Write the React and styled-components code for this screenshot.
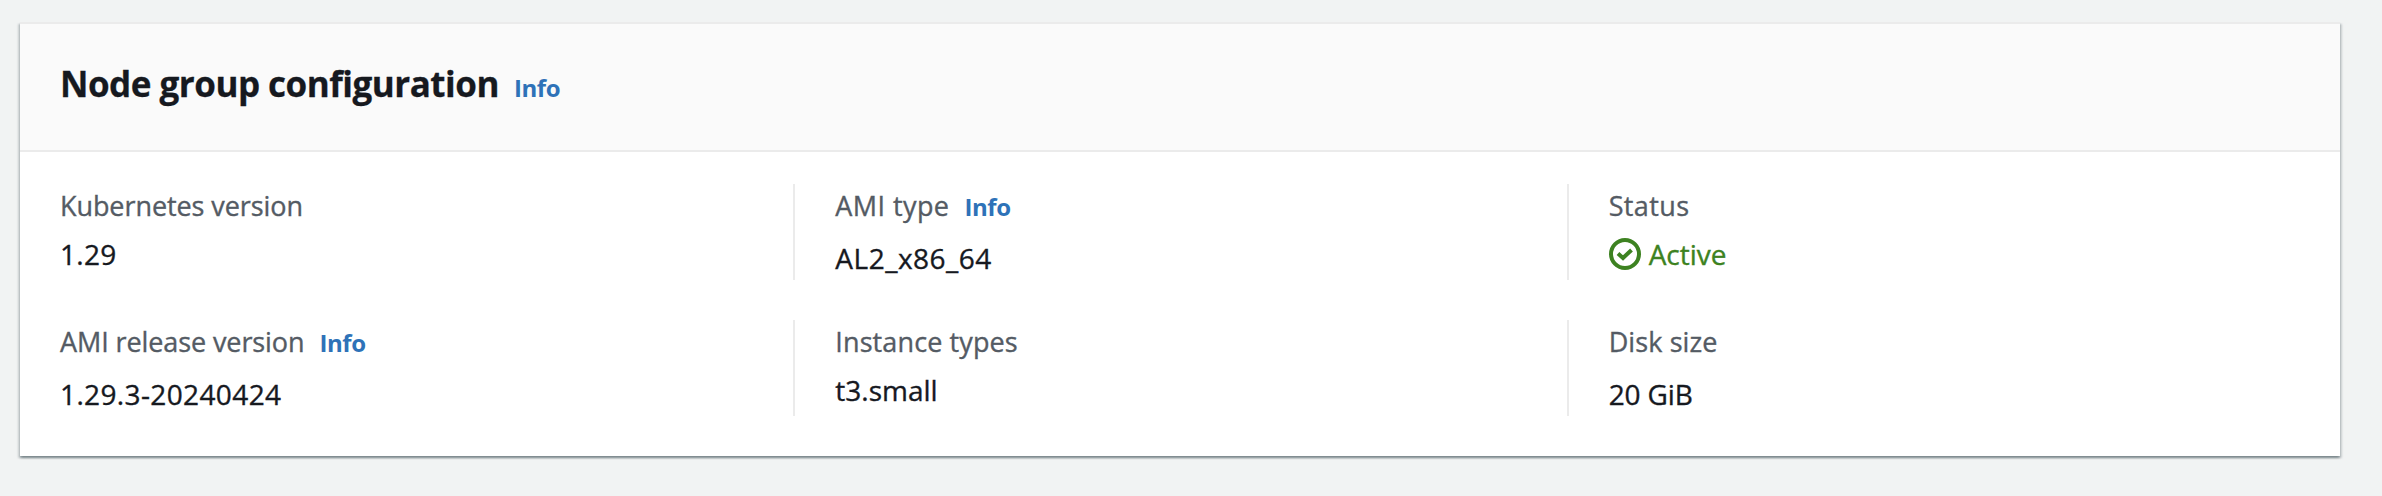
import React from 'react';
import styled, { createGlobalStyle } from 'styled-components';

const GlobalStyle = createGlobalStyle`
  * { box-sizing: border-box; }
  body {
    margin: 0;
    background: #f1f3f3;
    font-family: "Open Sans", "Noto Sans", sans-serif;
    font-size: 27px;
    line-height: 44px;
    color: #16191f;
  }
`;

const Page = styled.main`
  min-height: 496px;
  padding: 22px 42px 40px 20px;
`;

const Panel = styled.section`
  height: 434px;
  background: #fff;
  border-top: 2px solid #ebebeb;
  box-shadow:
    0 2px 2px 0 rgba(0, 28, 36, 0.3),
    2px 2px 2px 0 rgba(0, 28, 36, 0.15),
    -2px 2px 2px 0 rgba(0, 28, 36, 0.15);
`;

const PanelHeader = styled.header`
  display: flex;
  align-items: baseline;
  gap: 15px;
  height: 128px;
  padding: 37px 40px 0;
  background: #fafafa;
  border-bottom: 2px solid #ebebeb;
`;

const Title = styled.h2`
  margin: 0;
  font-size: 35px;
  font-weight: 700;
  line-height: 46px;
  letter-spacing: -0.5px;
  -webkit-text-stroke: 0.3px currentColor;
`;

const InfoLink = styled.a`
  font-size: 24px;
  font-weight: 700;
  line-height: 36px;
  letter-spacing: -0.4px;
  color: #2e72b8;
  cursor: pointer;
`;

const Columns = styled.div`
  display: grid;
  grid-template-columns: repeat(3, 1fr);
  row-gap: 40px;
  padding-top: 32px;
`;

const Cell = styled.div`
  height: 96px;
  padding-left: 40px;

  &:not(:nth-child(3n + 1)) {
    border-left: 2px solid #ebebeb;
  }
`;

const Label = styled.div`
  display: flex;
  align-items: baseline;
  gap: 15px;
  height: 44px;
  color: #545b64;
`;

const Text = styled.span`
  letter-spacing: ${({ $tracking }) => $tracking || 0}px;
  -webkit-text-stroke: 0.35px currentColor;
  white-space: nowrap;
`;

const Value = styled.div`
  display: flex;
  align-items: center;
  gap: 8px;
  margin-top: ${({ $loose }) => ($loose ? 8 : 4)}px;
  font-size: 28px;
  color: ${({ $success }) => ($success ? '#3d8221' : 'inherit')};
`;

const StatusIcon = styled.svg`
  width: 32px;
  height: 32px;
  fill: none;
  stroke: currentColor;
  stroke-width: 4;
`;

const fields = [
  { label: 'Kubernetes version', labelTracking: -0.08, value: '1.29', valueTracking: 0.3 },
  { label: 'AMI type', labelTracking: 0.42, info: true, value: 'AL2_x86_64', valueTracking: 0.49, loose: true },
  { label: 'Status', labelTracking: 0.38, value: 'Active', valueTracking: 0, success: true },
  { label: 'AMI release version', labelTracking: -0.1, info: true, value: '1.29.3-20240424', valueTracking: 0.37, loose: true },
  { label: 'Instance types', labelTracking: 0.11, value: 't3.small', valueTracking: 0 },
  { label: 'Disk size', labelTracking: 0.1, value: '20 GiB', valueTracking: -0.15, loose: true },
];

function Field({ label, labelTracking, info, value, valueTracking, loose, success }) {
  return (
    <Cell>
      <Label>
        <Text $tracking={labelTracking}>{label}</Text>
        {info && <InfoLink>Info</InfoLink>}
      </Label>
      <Value $loose={loose} $success={success}>
        {success && (
          <StatusIcon viewBox="0 0 32 32" aria-hidden="true">
            <circle cx="16" cy="16" r="14" />
            <path d="M9 15.5l5 4.5 8.5-8" />
          </StatusIcon>
        )}
        <Text $tracking={valueTracking}>{value}</Text>
      </Value>
    </Cell>
  );
}

export default function App() {
  return (
    <>
      <GlobalStyle />
      <Page>
        <Panel>
          <PanelHeader>
            <Title>Node group configuration</Title>
            <InfoLink>Info</InfoLink>
          </PanelHeader>
          <Columns>
            {fields.map((field) => (
              <Field key={field.label} {...field} />
            ))}
          </Columns>
        </Panel>
      </Page>
    </>
  );
}
